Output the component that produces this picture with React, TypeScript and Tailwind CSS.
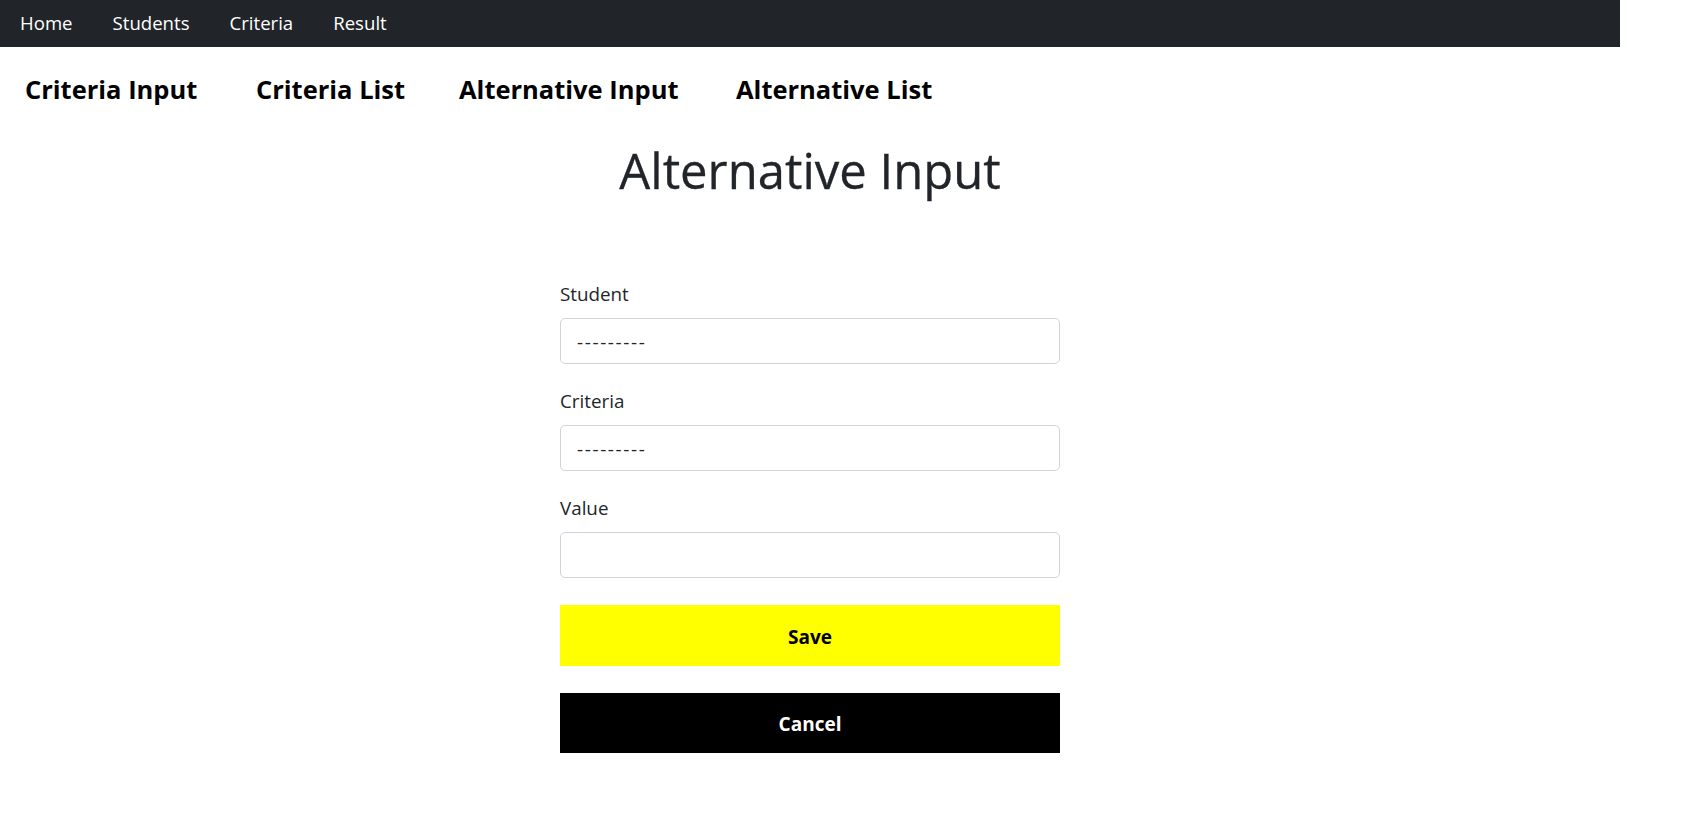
import React from "react";

const font = { fontFamily: '"Open Sans", "Noto Sans", sans-serif' };

function Field({ label, value }: { label: string; value?: string }) {
  return (
    <div className="flex flex-col">
      <div className="h-[28px] leading-[28px] text-[18.8px] text-[#212529]">{label}</div>
      <div className="mt-[10px] h-[46px] rounded-[5px] border border-[#ced4da] bg-white px-[16px] pt-[2px] flex items-center text-[19px] text-[#212529] tracking-[1.6px]">
        {value ?? ""}
      </div>
    </div>
  );
}

export default function App() {
  return (
    <div className="min-h-[828px] w-[1686px] bg-white" style={font}>
      <div className="w-[1620px]">
        <nav className="h-[47px] bg-[#212529] flex items-center pl-[20px] pb-[2px] gap-[40px] text-[18.6px] text-white">
          <span>Home</span>
          <span>Students</span>
          <span>Criteria</span>
          <span>Result</span>
        </nav>
        <div className="flex pl-[25px] pt-[25px] h-[91px] text-[25.5px] font-bold text-black leading-[34px]">
          <span className="w-[231px]">Criteria Input</span>
          <span className="w-[203px]">Criteria List</span>
          <span className="w-[277px]">Alternative Input</span>
          <span>Alternative List</span>
        </div>
        <h1 className="text-center text-[49px] leading-[64px] text-[#212529] [-webkit-text-stroke:0.3px_#212529]">Alternative Input</h1>
        <div className="mx-auto w-[500px] mt-[78px] flex flex-col gap-[23px]">
          <Field label="Student" value="---------" />
          <Field label="Criteria" value="---------" />
          <Field label="Value" />
        </div>
        <div className="mx-auto w-[500px] mt-[27px] flex flex-col gap-[27px]">
          <button className="h-[61px] w-full bg-[#ffff00] text-black font-bold text-[19px] pt-[3px]">Save</button>
          <button className="h-[60px] w-full bg-black text-white font-bold text-[19px] pt-[2px]">Cancel</button>
        </div>
      </div>
    </div>
  );
}
